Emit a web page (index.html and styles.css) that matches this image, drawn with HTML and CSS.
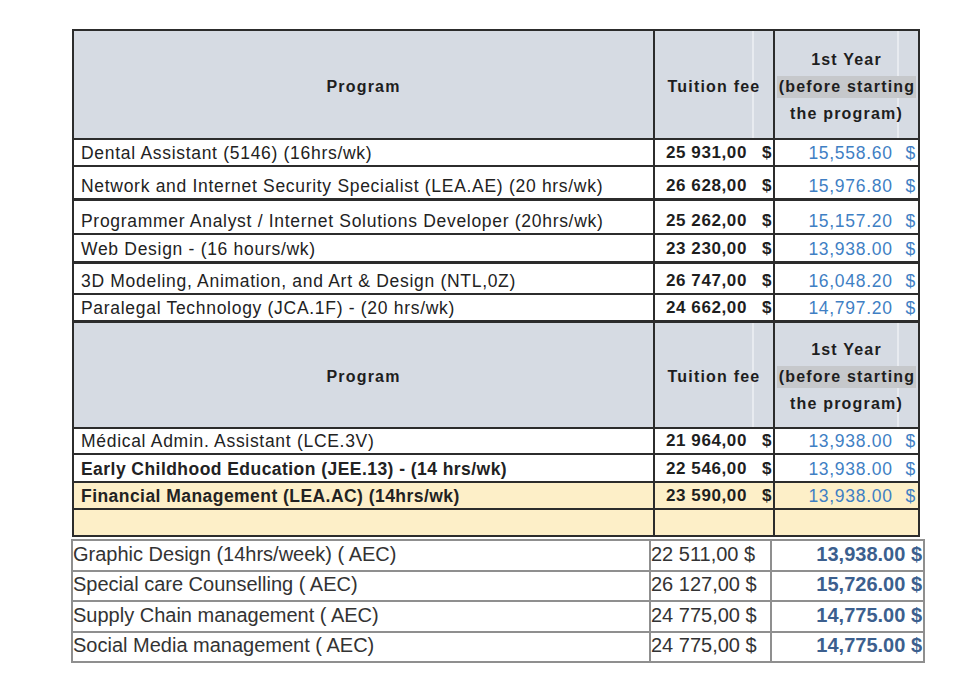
FILE: index.html
```html
<!DOCTYPE html>
<html lang="en">
<head>
<meta charset="utf-8">
<title>Tuition fees</title>
<link rel="stylesheet" href="styles.css">
</head>
<body>
<main class="page">
  <table class="fees">
    <colgroup>
      <col class="c-prog">
      <col class="c-fee">
      <col class="c-year">
    </colgroup>
    <tbody>
      <tr class="hdr h1">
        <th>Program</th>
        <th class="grid">Tuition fee</th>
        <th class="grid">1st Year<br><span class="mark">(before starting</span><br>the program)</th>
      </tr>
      <tr class="r27"><td>Dental Assistant (5146) (16hrs/wk)</td><td class="fee"><span>25 931,00</span><span class="cur">$</span></td><td class="yr"><span>15,558.60</span><span class="cur">$</span></td></tr>
      <tr class="r33"><td>Network and Internet Security Specialist (LEA.AE) (20 hrs/wk)</td><td class="fee"><span>26 628,00</span><span class="cur">$</span></td><td class="yr"><span>15,976.80</span><span class="cur">$</span></td></tr>
      <tr class="r35 thick"><td>Programmer Analyst / Internet Solutions Developer (20hrs/wk)</td><td class="fee"><span>25 262,00</span><span class="cur">$</span></td><td class="yr"><span>15,157.20</span><span class="cur">$</span></td></tr>
      <tr class="r28"><td>Web Design - (16 hours/wk)</td><td class="fee"><span>23 230,00</span><span class="cur">$</span></td><td class="yr"><span>13,938.00</span><span class="cur">$</span></td></tr>
      <tr class="r32 thick"><td>3D Modeling, Animation, and Art &amp; Design (NTL,0Z)</td><td class="fee"><span>26 747,00</span><span class="cur">$</span></td><td class="yr"><span>16,048.20</span><span class="cur">$</span></td></tr>
      <tr class="r27"><td>Paralegal Technology (JCA.1F) - (20 hrs/wk)</td><td class="fee"><span>24 662,00</span><span class="cur">$</span></td><td class="yr"><span>14,797.20</span><span class="cur">$</span></td></tr>
      <tr class="hdr h2 thick">
        <th>Program</th>
        <th class="grid">Tuition fee</th>
        <th class="grid">1st Year<br><span class="mark">(before starting</span><br>the program)</th>
      </tr>
      <tr class="r26"><td>Médical Admin. Assistant (LCE.3V)</td><td class="fee"><span>21 964,00</span><span class="cur">$</span></td><td class="yr"><span>13,938.00</span><span class="cur">$</span></td></tr>
      <tr class="r28"><td class="b">Early Childhood Education (JEE.13) - (14 hrs/wk)</td><td class="fee"><span>22 546,00</span><span class="cur">$</span></td><td class="yr"><span>13,938.00</span><span class="cur">$</span></td></tr>
      <tr class="r27 hl"><td class="b">Financial Management (LEA.AC) (14hrs/wk)</td><td class="fee"><span>23 590,00</span><span class="cur">$</span></td><td class="yr"><span>13,938.00</span><span class="cur">$</span></td></tr>
      <tr class="r27 hl"><td></td><td></td><td></td></tr>
    </tbody>
  </table>

  <table class="aec">
    <colgroup>
      <col class="a-prog">
      <col class="a-fee">
      <col class="a-year">
    </colgroup>
    <tbody>
      <tr><td>Graphic Design (14hrs/week) ( AEC)</td><td>22 511,00 $</td><td class="ay">13,938.00 $</td></tr>
      <tr><td>Special care Counselling ( AEC)</td><td>26 127,00 $</td><td class="ay">15,726.00 $</td></tr>
      <tr><td>Supply Chain management ( AEC)</td><td>24 775,00 $</td><td class="ay">14,775.00 $</td></tr>
      <tr><td>Social Media management ( AEC)</td><td>24 775,00 $</td><td class="ay">14,775.00 $</td></tr>
    </tbody>
  </table>
</main>
</body>
</html>
```

FILE: styles.css
```css
html, body {
  margin: 0;
  padding: 0;
  background: #ffffff;
}

body {
  font-family: "Liberation Sans", Arial, sans-serif;
  color: #222;
}

.page {
  padding: 29px 0 0 72px;
}

/* ---------- main fee table ---------- */
.fees {
  border-collapse: collapse;
  table-layout: fixed;
  width: 846px;
}

.c-prog { width: 581px; }
.c-fee { width: 120px; }
.c-year { width: 145px; }

.fees td,
.fees th {
  border: 2px solid #2c2c2c;
  padding: 0;
  overflow: hidden;
  white-space: nowrap;
}

.fees tr.thick > td,
.fees tr.thick > th {
  border-top-width: 3px;
}

.fees td {
  vertical-align: bottom;
  font-size: 17.5px;
  letter-spacing: 0.7px;
  line-height: 22px;
  padding: 0 0 1px 7px;
  background: #ffffff;
}

.fees td.b {
  font-weight: bold;
  letter-spacing: 0.45px;
}

.fees th {
  background: #d6dbe3;
  font-weight: bold;
  font-size: 16px;
  letter-spacing: 1.2px;
  line-height: 27px;
  text-align: center;
  vertical-align: middle;
  padding-top: 3px;
  color: #1e1e1e;
}

.fees th.grid {
  background-image: linear-gradient(to right,
    transparent calc(100% - 21px),
    #e8ebf0 calc(100% - 21px),
    #e8ebf0 calc(100% - 19px),
    transparent calc(100% - 19px));
}

.mark {
  background: #c6c8cb;
  padding: 2px 1px 3px 2px;
}

.h1 { height: 109px; }
.h2 { height: 107px; }
.r26 { height: 26px; }
.r27 { height: 27px; }
.r28 { height: 28px; }
.r32 { height: 32px; }
.r33 { height: 33px; }
.r35 { height: 35px; }

.fees td.fee {
  font-weight: bold;
  font-size: 17px;
  letter-spacing: 0.6px;
  text-align: right;
  padding: 0 1px 1px 0;
  color: #1e1e1e;
}

.fees td.fee .cur {
  margin-left: 15px;
}

.fees td.yr {
  text-align: right;
  padding: 0 2px 1px 0;
  color: #3f7fc4;
}

.fees td.yr .cur {
  margin-left: 13px;
}

.fees tr.hl > td {
  background: #fdefc8;
}

/* ---------- AEC table ---------- */
.aec {
  border-collapse: collapse;
  table-layout: fixed;
  width: 852px;
  margin: 2px 0 0 -1px;
}

.a-prog { width: 578px; }
.a-fee { width: 121px; }
.a-year { width: 153px; }

.aec tr {
  height: 30.5px;
}

.aec td {
  border: 2px solid #8f8f8f;
  padding: 0 0 3px 0;
  font-size: 20px;
  line-height: 22px;
  color: #333;
  white-space: nowrap;
  overflow: hidden;
  vertical-align: middle;
}

.aec td.ay {
  text-align: right;
  font-weight: bold;
  color: #3c5f8e;
  padding-right: 1px;
}
```
